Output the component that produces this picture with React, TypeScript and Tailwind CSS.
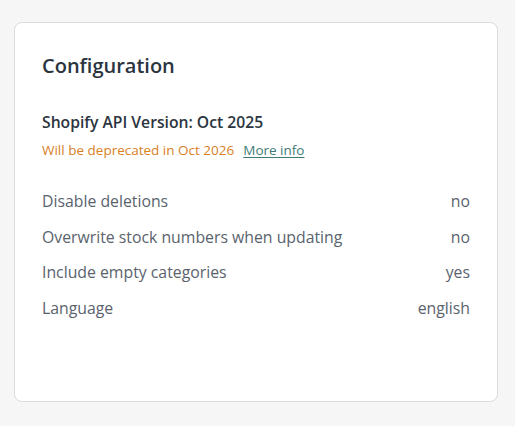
import React from "react";

const rows: [string, string][] = [
  ["Disable deletions", "no"],
  ["Overwrite stock numbers when updating", "no"],
  ["Include empty categories", "yes"],
  ["Language", "english"],
];

export default function App() {
  return (
    <div
      className="min-h-[426px] w-[515px] bg-[#f6f6f6] pl-[14px] pt-[22px]"
      style={{ fontFamily: '"Open Sans", sans-serif' }}
    >
      <div className="box-border h-[380px] w-[484px] rounded-[8px] border border-[#dcdcdc] bg-white pl-[27px] pr-[27px] pt-[29px]">
        <h2 className="text-[20px] font-semibold leading-[28px] text-[#2b3540]">Configuration</h2>
        <div className="mt-[30px] text-[15.7px] font-semibold leading-[24px] text-[#2b3540]">
          Shopify API Version: Oct 2025
        </div>
        <div className="mt-[6px] flex text-[13.5px] leading-[20px]">
          <span className="text-[#d9801f]">Will be deprecated in Oct 2026</span>
          <a href="#" className="ml-[9px] text-[#3f7c77] underline underline-offset-2">More info</a>
        </div>
        <div className="mt-[29px] flex flex-col gap-[11.7px]">
          {rows.map(([k, v]) => (
            <div key={k} className="flex justify-between text-[15.8px] leading-[24px] text-[#5a636d]">
              <span>{k}</span>
              <span>{v}</span>
            </div>
          ))}
        </div>
      </div>
    </div>
  );
}
